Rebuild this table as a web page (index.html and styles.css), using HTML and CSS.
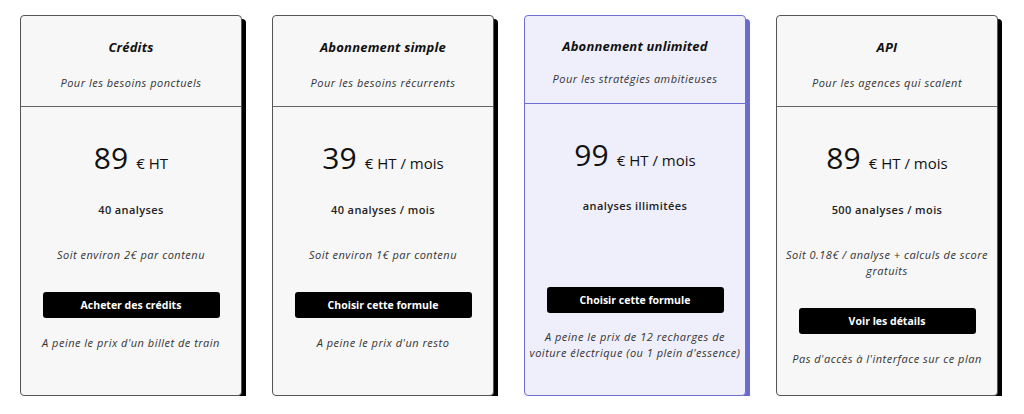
FILE: index.html
```html
<!DOCTYPE html>
<html lang="fr">
<head>
<meta charset="utf-8">
<title>Tarifs</title>
<link rel="stylesheet" href="styles.css">
</head>
<body>
<main class="plans">
  <section class="card">
    <header class="card-head">
      <h2 class="title">Crédits</h2>
      <p class="subtitle">Pour les besoins ponctuels</p>
    </header>
    <div class="card-body">
      <p class="price"><span class="amount">89</span> <span class="unit">€ HT</span></p>
      <p class="quota">40 analyses</p>
      <p class="note">Soit environ 2€ par contenu</p>
      <a class="btn">Acheter des crédits</a>
      <p class="foot">A peine le prix d'un billet de train</p>
    </div>
  </section>
  <section class="card">
    <header class="card-head">
      <h2 class="title">Abonnement simple</h2>
      <p class="subtitle">Pour les besoins récurrents</p>
    </header>
    <div class="card-body">
      <p class="price"><span class="amount">39</span> <span class="unit">€ HT / mois</span></p>
      <p class="quota">40 analyses / mois</p>
      <p class="note">Soit environ 1€ par contenu</p>
      <a class="btn">Choisir cette formule</a>
      <p class="foot">A peine le prix d'un resto</p>
    </div>
  </section>
  <section class="card card-featured">
    <header class="card-head">
      <h2 class="title">Abonnement unlimited</h2>
      <p class="subtitle">Pour les stratégies ambitieuses</p>
    </header>
    <div class="card-body">
      <p class="price"><span class="amount">99</span> <span class="unit">€ HT / mois</span></p>
      <p class="quota">analyses illimitées</p>
      <p class="note"></p>
      <a class="btn">Choisir cette formule</a>
      <p class="foot">A peine le prix de 12 recharges de<br>voiture électrique (ou 1 plein d'essence)</p>
    </div>
  </section>
  <section class="card">
    <header class="card-head">
      <h2 class="title">API</h2>
      <p class="subtitle">Pour les agences qui scalent</p>
    </header>
    <div class="card-body">
      <p class="price"><span class="amount">89</span> <span class="unit">€ HT / mois</span></p>
      <p class="quota">500 analyses / mois</p>
      <p class="note">Soit 0.18€ / analyse + calculs de score gratuits</p>
      <a class="btn">Voir les détails</a>
      <p class="foot">Pas d'accès à l'interface sur ce plan</p>
    </div>
  </section>
</main>
</body>
</html>
```
FILE: styles.css
```css
* { box-sizing: border-box; }
html, body { margin: 0; padding: 0; background: #fff; }
body {
  font-family: "Open Sans", "Noto Sans", sans-serif;
  color: #111;
}
.plans {
  display: flex;
  gap: 30px;
  padding: 15px 20px 0;
}
.card {
  width: 222px;
  height: 381px;
  display: flex;
  flex-direction: column;
  background: #f7f7f7;
  border: 1px solid #555;
  border-radius: 4px;
  box-shadow: 4px 4px 0 #000;
}
.card-head {
  height: 91px;
  padding: 22px 4px 0;
  border-bottom: 1px solid #666;
  text-align: center;
}
.title {
  margin: 0;
  font-size: 13px;
  line-height: 18px;
  font-weight: 700;
  font-style: italic;
  color: #111;
  letter-spacing: 0.2px;
}
.subtitle {
  margin: 19px 0 0;
  font-size: 11px;
  line-height: 16px;
  font-style: italic;
  color: #333;
  letter-spacing: 0.5px;
}
.card-body {
  display: flex;
  flex-direction: column;
  align-items: center;
  padding: 33px 3px 0;
  text-align: center;
}
.price {
  margin: 0;
  height: 36px;
  line-height: 36px;
  color: #111;
  white-space: nowrap;
}
.amount { font-size: 30px; font-weight: 500; }
.unit { font-size: 15px; font-weight: 500; margin-left: 4px; }
.quota {
  margin: 26px 0 0;
  font-size: 11px;
  line-height: 16px;
  font-weight: 600;
  color: #222;
  letter-spacing: 0.4px;
}
.note {
  margin: 29px 0 0;
  min-height: 16px;
  font-size: 11px;
  line-height: 16px;
  font-style: italic;
  color: #333;
  letter-spacing: 0.5px;
}
.btn {
  display: flex;
  align-items: center;
  justify-content: center;
  margin-top: 29px;
  width: 177px;
  height: 26px;
  background: #000;
  color: #fff;
  border-radius: 3px;
  font-size: 10.5px;
  font-weight: 700;
}
.foot {
  margin: 17px 0 0;
  font-size: 11px;
  line-height: 16px;
  font-style: italic;
  color: #333;
  letter-spacing: 0.5px;
}
.card-featured {
  background: #efeffb;
  border-color: #6f6fd2;
  box-shadow: 4px 4px 0 #6a6ad0;
}
.card-featured .card-head {
  height: 88px;
  padding-top: 21px;
  border-bottom-color: #6f6fd2;
}
.card-featured .subtitle { margin-top: 16px; }
.card-featured .quota { margin-top: 25px; }
.card-featured .btn { margin-top: 28px; }
.card-featured .foot { margin-top: 16px; }
```
